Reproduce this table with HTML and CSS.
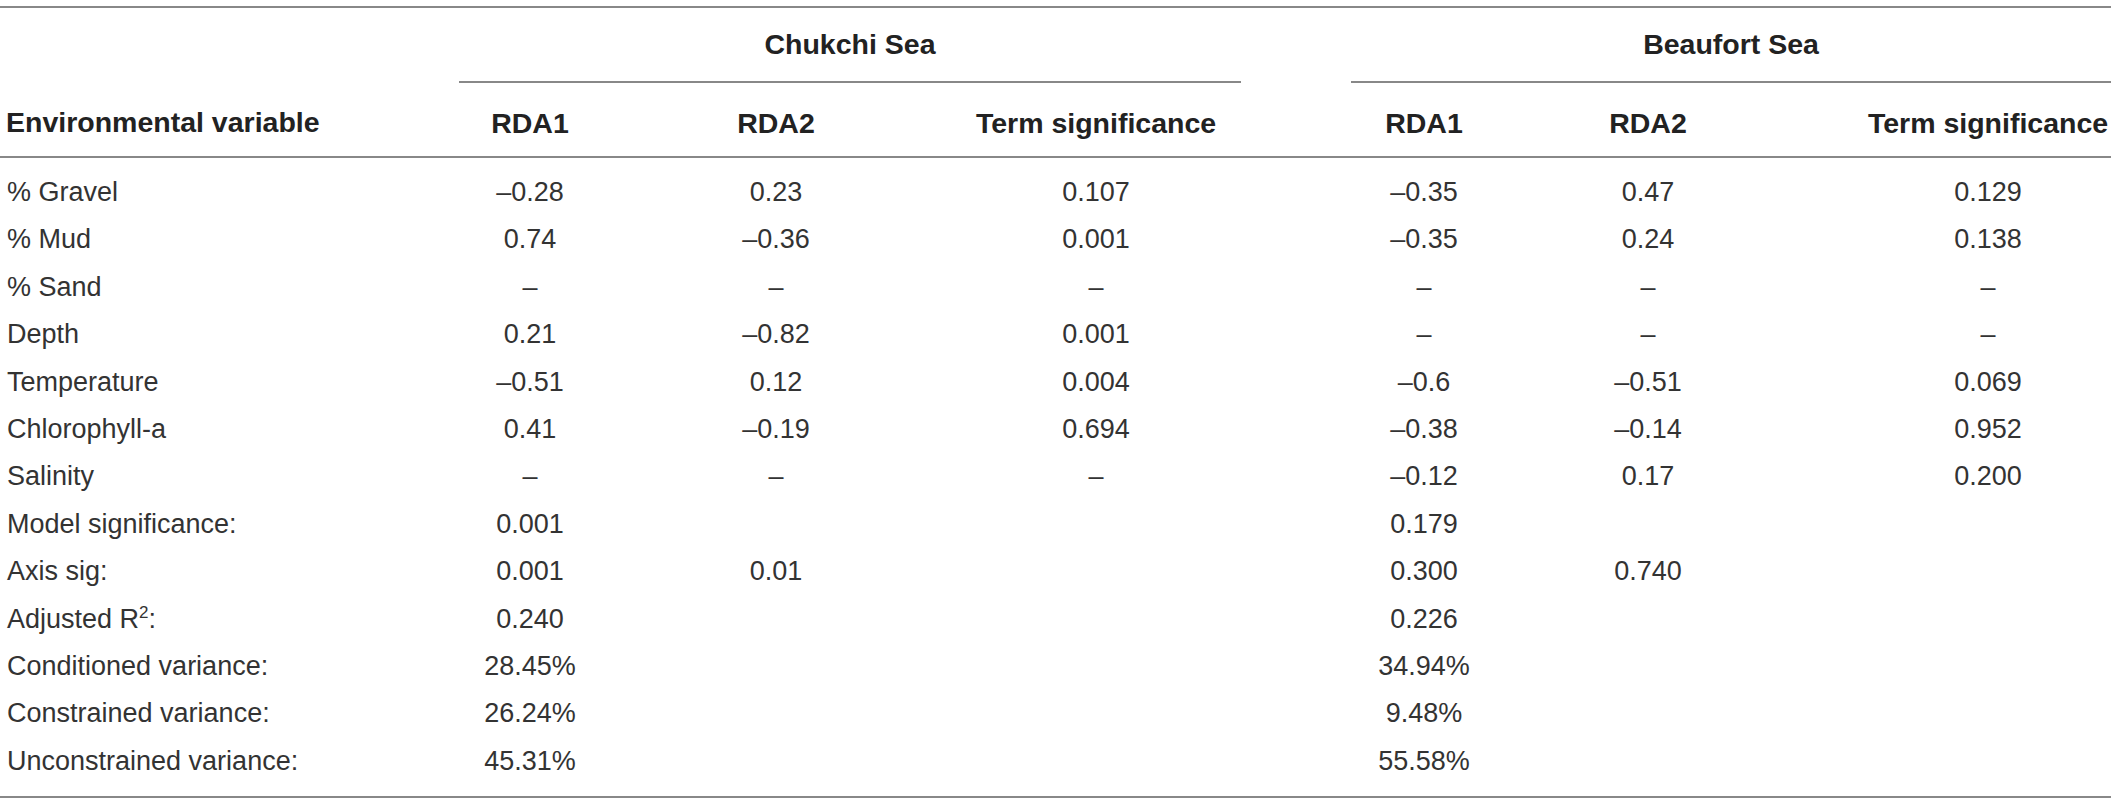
FILE: index.html
```html
<!DOCTYPE html>
<html lang="en">
<head>
  <meta charset="UTF-8" />
  <title>RDA results</title>
  <link rel="stylesheet" href="styles.css">
</head>
<body>

<table class="rda">
  <colgroup>
    <col class="col-var">
    <col class="col-rda1">
    <col class="col-rda2">
    <col class="col-term">
    <col class="col-gap">
    <col class="col-rda1b">
    <col class="col-rda2b">
    <col class="col-termb">
  </colgroup>
  <thead>
    <tr class="group-row">
      <th></th>
      <th colspan="3" class="group">Chukchi Sea</th>
      <th></th>
      <th colspan="3" class="group">Beaufort Sea</th>
    </tr>
    <tr class="head-row">
      <th class="var">Environmental variable</th>
      <th>RDA1</th>
      <th>RDA2</th>
      <th>Term significance</th>
      <th></th>
      <th>RDA1</th>
      <th>RDA2</th>
      <th class="last">Term significance</th>
    </tr>
  </thead>
  <tbody>
    <tr><td>% Gravel</td><td>–0.28</td><td>0.23</td><td>0.107</td><td></td><td>–0.35</td><td>0.47</td><td>0.129</td></tr>
    <tr><td>% Mud</td><td>0.74</td><td>–0.36</td><td>0.001</td><td></td><td>–0.35</td><td>0.24</td><td>0.138</td></tr>
    <tr><td>% Sand</td><td>–</td><td>–</td><td>–</td><td></td><td>–</td><td>–</td><td>–</td></tr>
    <tr><td>Depth</td><td>0.21</td><td>–0.82</td><td>0.001</td><td></td><td>–</td><td>–</td><td>–</td></tr>
    <tr><td>Temperature</td><td>–0.51</td><td>0.12</td><td>0.004</td><td></td><td>–0.6</td><td>–0.51</td><td>0.069</td></tr>
    <tr><td>Chlorophyll-a</td><td>0.41</td><td>–0.19</td><td>0.694</td><td></td><td>–0.38</td><td>–0.14</td><td>0.952</td></tr>
    <tr><td>Salinity</td><td>–</td><td>–</td><td>–</td><td></td><td>–0.12</td><td>0.17</td><td>0.200</td></tr>
    <tr><td>Model significance:</td><td>0.001</td><td></td><td></td><td></td><td>0.179</td><td></td><td></td></tr>
    <tr><td>Axis sig:</td><td>0.001</td><td>0.01</td><td></td><td></td><td>0.300</td><td>0.740</td><td></td></tr>
    <tr><td>Adjusted R<sup>2</sup>:</td><td>0.240</td><td></td><td></td><td></td><td>0.226</td><td></td><td></td></tr>
    <tr><td>Conditioned variance:</td><td>28.45%</td><td></td><td></td><td></td><td>34.94%</td><td></td><td></td></tr>
    <tr><td>Constrained variance:</td><td>26.24%</td><td></td><td></td><td></td><td>9.48%</td><td></td><td></td></tr>
    <tr><td>Unconstrained variance:</td><td>45.31%</td><td></td><td></td><td></td><td>55.58%</td><td></td><td></td></tr>
  </tbody>
</table>

</body>
</html>
```

FILE: styles.css
```css
body {
  margin: 0;
  padding: 0;
  background: white;
  font-family: "Liberation Sans", Arial, sans-serif;
  color: #333;
}

/* Table frame */
.rda {
  width: 2111px;
  margin-top: 6px;
  table-layout: fixed;
  border-collapse: collapse;
  border-top: 2px solid #888;
  border-bottom: 2px solid #888;
}

.col-var { width: 459px; }
.col-rda1 { width: 142px; }
.col-rda2 { width: 350px; }
.col-term { width: 290px; }
.col-gap { width: 110px; }
.col-rda1b { width: 146px; }
.col-rda2b { width: 302px; }
.col-termb { width: 312px; }

/* Header rows */
.rda th {
  font-size: 28.5px;
  font-weight: bold;
  color: #222;
  text-align: center;
  white-space: nowrap;
  padding: 0;
}

.group-row th {
  height: 73px;
}

.group-row th.group {
  border-bottom: 2px solid #888;
}

.head-row th {
  height: 66px;
  padding-top: 7px;
  border-bottom: 2px solid #888;
}

.head-row th.var {
  text-align: left;
  padding-left: 6px;
}

.head-row th.last {
  padding-left: 66px;
}

/* Body rows */
.rda td {
  font-size: 27px;
  line-height: 47.4px;
  text-align: center;
  white-space: nowrap;
  padding: 0;
}

.rda td:first-child {
  text-align: left;
  padding-left: 7px;
}

.rda td:nth-child(8) {
  padding-left: 66px;
}

.rda tbody tr:first-child td {
  padding-top: 11px;
}

.rda tbody tr:last-child td {
  padding-bottom: 11px;
}

.rda sup {
  font-size: 17px;
  line-height: 0;
}
```
